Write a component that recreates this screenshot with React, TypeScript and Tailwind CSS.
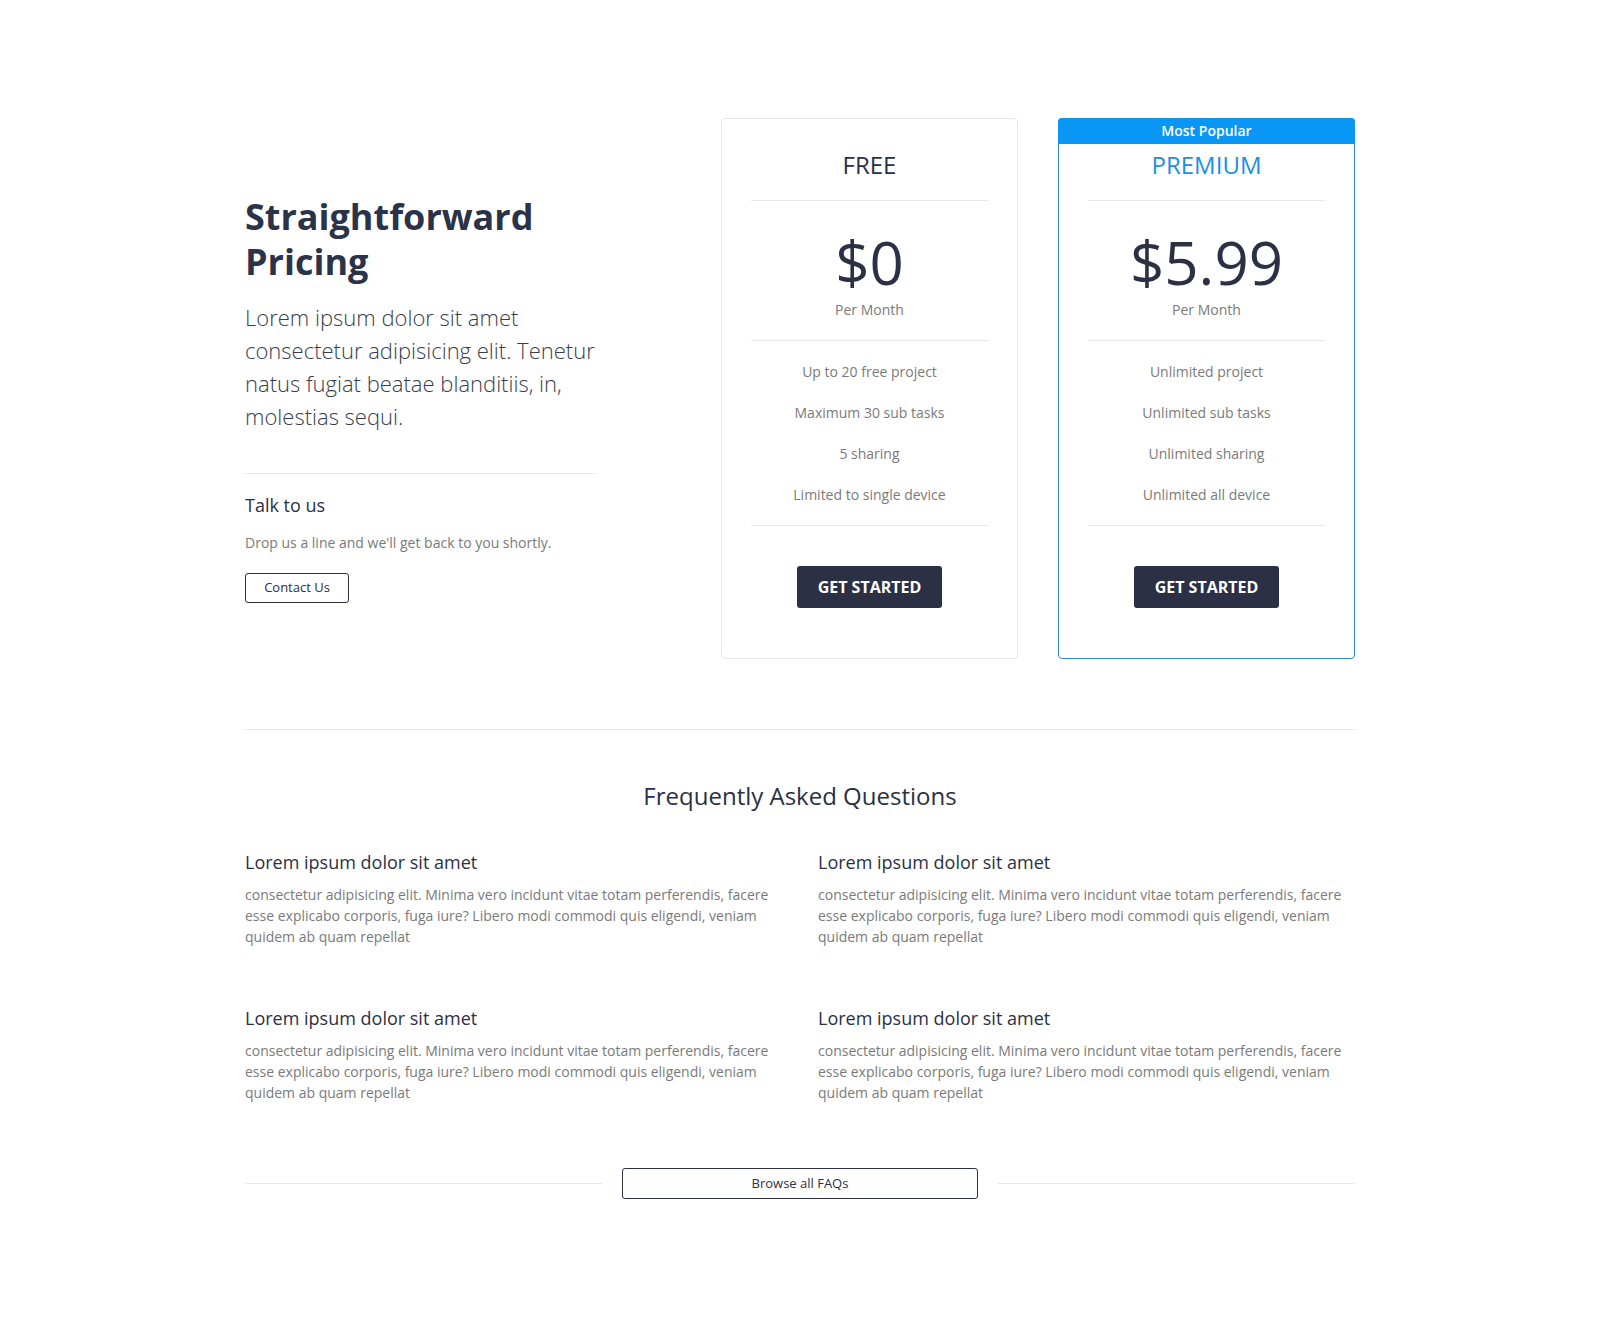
import React from "react";

const plans = [
  {
    name: "FREE",
    price: "$0",
    popular: false,
    features: ["Up to 20 free project", "Maximum 30 sub tasks", "5 sharing", "Limited to single device"],
  },
  {
    name: "PREMIUM",
    price: "$5.99",
    popular: true,
    features: ["Unlimited project", "Unlimited sub tasks", "Unlimited sharing", "Unlimited all device"],
  },
];

const faqBody =
  "consectetur adipisicing elit. Minima vero incidunt vitae totam perferendis, facere esse explicabo corporis, fuga iure? Libero modi commodi quis eligendi, veniam quidem ab quam repellat";

function PlanCard({ plan }: { plan: (typeof plans)[number] }) {
  return (
    <div
      className={`relative w-[297px] rounded-[4px] border bg-white px-[29px] pb-[50px] text-center ${
        plan.popular ? "border-[#2b8bd6]" : "border-[#e6e6e6]"
      }`}
    >
      {plan.popular && (
        <div className="absolute -left-px -right-px -top-px h-[26px] rounded-t-[4px] bg-[#0a96f5] text-[14px] font-semibold leading-[26px] text-white">
          Most Popular
        </div>
      )}
      <div className="border-b border-[#e8e8e8] pb-[17px] pt-[28px]">
        <h3 className={`text-[24px] leading-[36px] ${plan.popular ? "text-[#1a8fe3]" : "text-[#2b3044]"}`}>
          {plan.name}
        </h3>
      </div>
      <div className="border-b border-[#e8e8e8] pb-[20px] pt-[31px]">
        <div className="text-[60px] leading-[60px] text-[#2b3044]">{plan.price}</div>
        <div className="mt-[7px] text-[14px] leading-[21px] text-[#7a7a7a]">Per Month</div>
      </div>
      <ul className="flex flex-col gap-[20px] border-b border-[#e8e8e8] pb-[20px] pt-[20px]">
        {plan.features.map((f) => (
          <li key={f} className="text-[14px] leading-[21px] text-[#7a7a7a]">
            {f}
          </li>
        ))}
      </ul>
      <button className="mt-[40px] h-[42px] rounded-[3px] bg-[#2b3044] px-[21px] text-[16px] font-bold text-white">
        GET STARTED
      </button>
    </div>
  );
}

export default function App() {
  return (
    <div className="min-h-screen bg-white font-['Open_Sans',sans-serif] text-[#2b3044]">
      <div className="mx-auto w-[1110px] pb-[124px] pt-[118px]">
        {/* Pricing */}
        <section className="flex items-start">
          <div className="w-[350px] pt-[76px]">
            <h1 className="text-[36px] font-bold leading-[45px] text-[#2b3349]">
              Straightforward
              <br />
              Pricing
            </h1>
            <p className="mt-[17px] text-[22px] font-light leading-[33px] text-[#383d4d]">
              Lorem ipsum dolor sit amet consectetur adipisicing elit. Tenetur natus fugiat beatae blanditiis, in,
              molestias sequi.
            </p>
            <div className="mt-[40px] border-t border-[#e8e8e8]" />
            <h4 className="mt-[18px] text-[18px] leading-[27px] text-[#2b3044]">Talk to us</h4>
            <p className="mt-[13px] text-[14px] leading-[21px] text-[#7a7a7a]">
              Drop us a line and we'll get back to you shortly.
            </p>
            <button className="mt-[20px] h-[30px] w-[104px] rounded-[3px] border border-[#2b3044] text-[13px] text-[#2b3044]">
              Contact Us
            </button>
          </div>
          <div className="ml-auto flex gap-[40px]">
            {plans.map((p) => (
              <PlanCard key={p.name} plan={p} />
            ))}
          </div>
        </section>

        <div className="mt-[70px] border-t border-[#e8e8e8]" />

        {/* FAQ */}
        <section>
          <h2 className="mt-[46px] text-center text-[24px] leading-[39px] text-[#2b3044]">
            Frequently Asked Questions
          </h2>
          <div className="mt-[34px] grid grid-cols-2 gap-x-[36px] gap-y-[58px]">
            {[0, 1, 2, 3].map((i) => (
              <div key={i}>
                <h5 className="text-[18px] leading-[27px] text-[#2b3044]">Lorem ipsum dolor sit amet</h5>
                <p className="mt-[8px] text-[14px] leading-[21px] text-[#7a7a7a]">{faqBody}</p>
              </div>
            ))}
          </div>
          <div className="mt-[65px] grid grid-cols-3 items-center gap-[20px]">
            <div className="border-t border-[#e8e8e8]" />
            <button className="h-[31px] rounded-[3px] border border-[#2b3044] text-[13px] text-[#2b3044]">
              Browse all FAQs
            </button>
            <div className="border-t border-[#e8e8e8]" />
          </div>
        </section>
      </div>
    </div>
  );
}
